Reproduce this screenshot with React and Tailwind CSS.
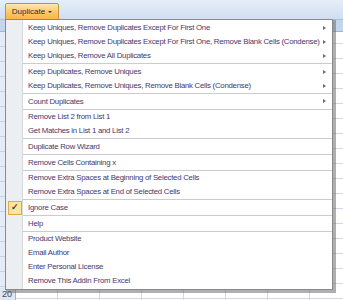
import React from 'react';

const items = [
  { label: 'Keep Uniques, Remove Duplicates Except For First One', sub: true },
  { label: 'Keep Uniques, Remove Duplicates Except For First One, Remove Blank Cells (Condense)', sub: true },
  { label: 'Keep Uniques, Remove All Duplicates', sub: true, sep: true },
  { label: 'Keep Duplicates, Remove Uniques', sub: true },
  { label: 'Keep Duplicates, Remove Uniques, Remove Blank Cells (Condense)', sub: true, sep: true },
  { label: 'Count Duplicates', sub: true, sep: true },
  { label: 'Remove List 2 from List 1' },
  { label: 'Get Matches in List 1 and List 2', sep: true },
  { label: 'Duplicate Row Wizard', sep: true },
  { label: 'Remove Cells Containing x', sep: true },
  { label: 'Remove Extra Spaces at Beginning of Selected Cells' },
  { label: 'Remove Extra Spaces at End of Selected Cells', sep: true },
  { label: 'Ignore Case', checked: true, sep: true },
  { label: 'Help', sep: true },
  { label: 'Product Website' },
  { label: 'Email Author' },
  { label: 'Enter Personal License' },
  { label: 'Remove This Addin From Excel' },
];

const MenuItem = ({ item }) => (
  <>
    <div className="flex items-center h-[14px]">
      <div className="w-[17px] h-full flex items-center justify-center shrink-0">
        {item.checked && (
          <div className="w-[14px] h-[14px] bg-[#fde69c] border border-[#e3a84b] flex items-center justify-center text-[9px] leading-none text-[#2a3a78] font-bold">
            ✓
          </div>
        )}
      </div>
      <div className="pl-[5px] flex-1 text-[7.8px] tracking-[-0.25px] text-[#46386e] whitespace-nowrap">{item.label}</div>
      {item.sub && (
        <div className="w-0 h-0 mr-[6px] border-y-[2.5px] border-y-transparent border-l-[3px] border-l-[#6a6a6a]" />
      )}
    </div>
    {item.sep && (
      <div className="flex h-[1.7px] items-center">
        <div className="w-[17px] shrink-0" />
        <div className="flex-1 h-px bg-[#c9ccd2]" />
      </div>
    )}
  </>
);

export default function App() {
  return (
    <div
      className="relative w-[343px] h-[300px] overflow-hidden bg-white"
      style={{ fontFamily: '"Liberation Sans", Arial, sans-serif' }}
    >
      {/* ribbon */}
      <div className="h-[20px] bg-gradient-to-b from-[#e6eef9] to-[#cfdef2] border-b border-[#a9bfd9]" />
      <div className="h-[12px] bg-[#c4d6ee] border-b border-[#9fb6d3]" />
      {/* sheet */}
      <div className="flex h-[268px]">
        <div className="w-[16px] bg-[#e4ecf7] border-r border-[#9eb6ce] flex flex-col justify-end bg-[linear-gradient(to_bottom,transparent_14px,#c5d3e3_14px)] bg-[length:100%_15px]">
          <div className="text-[9px] text-[#3b4a66] pl-[2px] leading-[12px] bg-[#dde6f2]">20</div>
        </div>
        <div className="flex-1 bg-[linear-gradient(to_right,transparent_41px,#d0d7e5_41px),linear-gradient(to_bottom,transparent_14px,#d0d7e5_14px)] bg-[length:42px_15px,100%_15px] bg-[position:0_0,0_-3px]" />
      </div>

      {/* Duplicate button */}
      <div className="absolute left-[5px] top-[3px] w-[54px] h-[17px] rounded-t-[2px] border border-[#c2933f] bg-gradient-to-b from-[#fde8b0] via-[#fcc96a] to-[#f8b64a] flex items-center justify-center gap-[3px]">
        <span className="text-[8px] text-[#1f2d57]">Duplicate</span>
        <span className="w-0 h-0 border-x-[2px] border-x-transparent border-t-[2.5px] border-t-[#3a3a3a] mt-[1px]" />
      </div>

      {/* Menu */}
      <div className="absolute left-[5px] top-[19px] w-[328px] border border-[#8a8a8a] bg-white shadow-[2px_2px_0_1px_rgba(110,110,110,0.55)]">
        <div className="relative py-[1px]">
          <div className="absolute left-0 top-0 bottom-0 w-[17px] bg-[#eceff2] border-r border-[#d5d8dc]" />
          <div className="relative">
            {items.map((it, i) => (
              <MenuItem key={i} item={it} />
            ))}
          </div>
        </div>
      </div>
    </div>
  );
}
